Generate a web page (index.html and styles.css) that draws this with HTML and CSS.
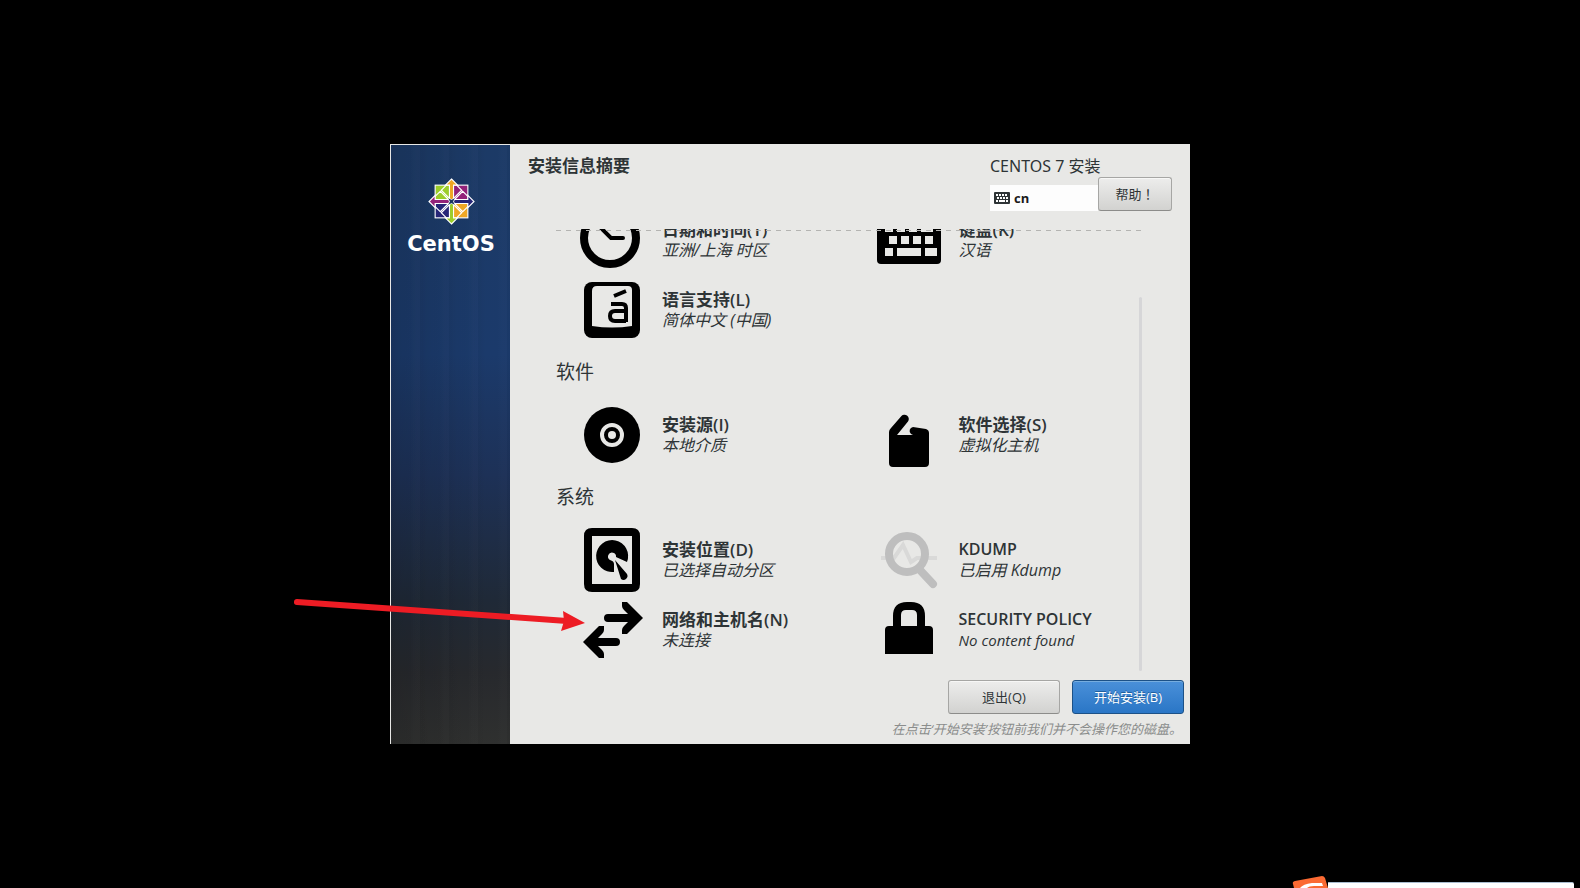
FILE: index.html
```html
<!DOCTYPE html>
<html lang="zh-CN">
<head>
<meta charset="utf-8">
<title>CentOS 7 安装</title>
<link rel="stylesheet" href="styles.css">
</head>
<body>
<main class="installer">
  <aside class="sidebar">
    <svg class="logo" viewBox="-23 -23 46 46" aria-hidden="true">
      <g stroke="#fff" stroke-width="1.1">
        <rect x="-16" y="-16" width="15" height="15" fill="#9ccd2a"/>
        <rect x="1" y="-16" width="15" height="15" fill="#932279"/>
        <rect x="1" y="1" width="15" height="15" fill="#efa724"/>
        <rect x="-16" y="1" width="15" height="15" fill="#262577"/>
        <path d="M0-22 6-16H2V-2H-2V-16H-6Z" fill="#efa724"/>
        <path d="M22 0 16 6V2H2V-2H16V-6Z" fill="#262577"/>
        <path d="M0 22 6 16H2V2H-2V16H-6Z" fill="#9ccd2a"/>
        <path d="M-22 0-16 6V2H-2V-2H-16V-6Z" fill="#932279"/>
        <path d="M-1-2-10-11-5-16M1-2 10-11 5-16M-1 2-10 11-5 16M1 2 10 11 5 16M-2-1-11-10-16-5M2-1 11-10 16-5M-2 1-11 10-16 5M2 1 11 10 16 5" fill="none"/>
      </g>
      <path d="M-2-2 0-1 2-2 1 0 2 2 0 1-2 2-1 0Z" fill="#1a3560" stroke="#1a3560"/>
    </svg>
    <div class="wordmark">CentOS</div>
  </aside>
  <section class="content">
    <header class="header">
      <h1 class="title">安装信息摘要</h1>
      <div class="session">
        <div class="product">CENTOS 7 安装</div>
        <div class="session-row">
          <div class="layout">
            <svg class="layout-icon" viewBox="0 0 16 12" aria-hidden="true"><rect width="16" height="12" rx="1" fill="#2e3436"/><path d="M2 3h12M3 6h11" stroke="#fff" stroke-width="2" stroke-dasharray="2 1"/><path d="M2 9h2M5 9h6M12 9h2" stroke="#fff" stroke-width="2"/></svg>
            <span>cn</span>
          </div>
          <button class="button help" type="button">帮助<span lang="zh-TW">！</span></button>
        </div>
      </div>
    </header>
    <div class="hub">
      <div class="hub-list">
        <div class="group">
          <a class="spoke" href="#datetime">
            <svg class="icon" viewBox="0 0 64 64" aria-hidden="true"><g fill="none" stroke="#000"><circle cx="30" cy="30" r="26" stroke-width="8"/><path d="M20 19 31 30H43" stroke-width="4" stroke-linecap="round"/></g></svg>
            <span class="label"><b>日期和时间(T)</b><i>亚洲/上海 时区</i></span>
          </a>
          <a class="spoke" href="#keyboard">
            <svg class="icon" viewBox="0 0 64 64" aria-hidden="true"><rect y="8" width="64" height="48" rx="4"/><path fill="#e8e8e6" d="M8 16h8v8H8zM20 16h8v8h-8zM32 16h8v8h-8zM44 16h12v8H44zM12 28h8v8h-8zM24 28h8v8h-8zM36 28h8v8h-8zM48 28h8v8h-8zM8 40h8v8H8zM20 40h24v8H20zM48 40h12v8H48z"/></svg>
            <span class="label"><b>键盘(K)</b><i>汉语</i></span>
          </a>
          <a class="spoke" href="#language">
            <svg class="icon" viewBox="0 0 64 64" aria-hidden="true"><rect x="4" y="4" width="56" height="56" rx="8"/><path fill="#e8e8e6" d="M17 8H48Q52 8 52 12V48Q32 51 12 48V13Q12 8 17 8Z"/><path d="M31 26H42Q46 26 46 30V44M46 33H35Q30 33 30 38T35 43H46M34 18 46 13" fill="none" stroke="#000" stroke-width="4"/></svg>
            <span class="label"><b>语言支持(L)</b><i>简体中文 (中国)</i></span>
          </a>
        </div>
        <h2 class="section">软件</h2>
        <div class="group">
          <a class="spoke" href="#source">
            <svg class="icon" viewBox="0 0 64 64" aria-hidden="true"><circle cx="32" cy="32" r="28"/><circle cx="32" cy="32" r="10" fill="none" stroke="#e8e8e6" stroke-width="4"/><circle cx="32" cy="32" r="4" fill="#e8e8e6"/></svg>
            <span class="label"><b>安装源(I)</b><i>本地介质</i></span>
          </a>
          <a class="spoke" href="#software">
            <svg class="icon" viewBox="0 0 64 64" aria-hidden="true"><path d="M12 29Q12 27 14 25L24 13.500A4 4 0 0 1 31 18.500L20 32H36L34 31A4 4 0 0 1 36 24L49 26Q52 27 52 30V60Q52 64 48 64H16Q12 64 12 60Z"/></svg>
            <span class="label"><b>软件选择(S)</b><i>虚拟化主机</i></span>
          </a>
        </div>
        <h2 class="section">系统</h2>
        <div class="group">
          <a class="spoke" href="#destination">
            <svg class="icon" viewBox="0 0 64 64" aria-hidden="true"><path fill-rule="evenodd" d="M12 0H52Q60 0 60 8V56Q60 64 52 64H12Q4 64 4 56V8Q4 0 12 0ZM12 8V56H52V8Z"/><path d="M34 44A16 16 0 1 1 47 34L36 29A4 4 0 1 0 30 32Q34 33 34 36Z"/><path d="M35 32 47 46A4 4 0 0 1 41 51Z"/></svg>
            <span class="label"><b>安装位置(D)</b><i>已选择自动分区</i></span>
          </a>
          <a class="spoke" href="#kdump">
            <svg class="icon" viewBox="0 0 64 64" aria-hidden="true"><path d="M4 30H17L26 17 34 34 40 30H60" fill="none" stroke="#d9d9d8" stroke-width="4"/><g fill="none" stroke="#bebebe"><circle cx="30" cy="26" r="18" stroke-width="8"/><path d="M42 41 56 56" stroke-width="8" stroke-linecap="round"/></g></svg>
            <span class="label"><b class="latin">KDUMP</b><i>已启用 Kdump</i></span>
          </a>
          <a class="spoke" href="#network">
            <svg class="icon" viewBox="0 0 64 64" aria-hidden="true"><path d="M28 20H56M12 44H36" fill="none" stroke="#000" stroke-width="8" stroke-linecap="round"/><path d="M42 4H47L63 20 47 36H42V32Q42 30 44 28L52 20 44 12Q42 10 42 8Z"/><path d="M24 28H19L3 44 19 60H24V56Q24 54 22 52L14 44 22 36Q24 34 24 32Z"/></svg>
            <span class="label"><b>网络和主机名(N)</b><i>未连接</i></span>
          </a>
          <a class="spoke" href="#security">
            <svg class="icon" viewBox="0 0 64 64" aria-hidden="true"><path fill-rule="evenodd" d="M8 32Q8 28 12 28H16V18Q16 4 30 4H34Q48 4 48 18V28H52Q56 28 56 32V56H8ZM24 28H40V17Q40 12 35 12H29Q24 12 24 17Z"/></svg>
            <span class="label"><b class="latin">SECURITY POLICY</b><i class="latin">No content found</i></span>
          </a>
        </div>
      </div>
      <div class="scrollbar"></div>
    </div>
    <footer class="footer">
      <div class="actions">
        <button class="button" type="button">退出(Q)</button>
        <button class="button primary" type="button">开始安装(B)</button>
      </div>
      <p class="note">在点击‘开始安装’按钮前我们并不会操作您的磁盘。</p>
    </footer>
  </section>
  <svg class="pointer" viewBox="0 0 294 32" aria-hidden="true"><path d="M5 6 275 25" stroke="#ed1c24" stroke-width="6" stroke-linecap="round"/><path d="M271 15 293 27 269 35 272 25Z" fill="#ed1c24"/></svg>
</main>
<div class="ime">
  <svg class="ime-logo" viewBox="0 0 36 12" aria-hidden="true"><path d="M1 8Q0 6 3 5L30 0Q32 0 33 2L36 12H2Z" fill="#fb6a33"/><path d="M8 12Q11 8 20 7H30L31 10H22Q17 10 15 12Z" fill="#fff"/></svg>
  <div class="ime-bar"></div>
</div>
</body>
</html>
```
FILE: styles.css
```css
* { box-sizing: border-box; }

body {
  margin: 0;
  min-height: 100vh;
  display: flex;
  align-items: center;
  justify-content: center;
  background: #000;
  color: #2e3436;
  font-family: "Open Sans", "Noto Sans CJK SC", sans-serif;
  font-size: 16px;
  overflow: hidden;
}

.installer {
  position: relative;
  display: flex;
  width: 100%;
  max-width: 800px;
  min-height: 600px;
  padding: 1px 0 0 1px;
  background: #e8e8e6;
}

.sidebar {
  flex: 0 0 119px;
  display: flex;
  flex-direction: column;
  align-items: center;
  padding: 33px 0 0 1px;
  background:
    repeating-linear-gradient(90deg, rgba(0, 0, 0, 0.02) 0 3px, transparent 8px 19px, rgba(255, 255, 255, 0.01) 24px 29px),
    linear-gradient(90deg, rgba(0, 0, 0, 0.12), transparent 80%),
    linear-gradient(#1c3a66 0%, #1b3a6b 35%, #1d3157 55%, #1f2937 76%, #27292d 88%, #2f302f 100%);
}

.logo { width: 47px; height: 47px; }

.wordmark {
  color: #fff;
  font: bold 21px/38px "DejaVu Sans", sans-serif;
}

.content {
  flex: 1;
  min-width: 0;
  display: flex;
  flex-direction: column;
}

.header {
  display: flex;
  justify-content: space-between;
  height: 84px;
  padding: 9px 18px 0;
}

.title {
  margin: 0;
  font-size: 17px;
  font-weight: 700;
  line-height: 24px;
}

.product { font-family: "Noto Sans", "Noto Sans CJK SC", sans-serif; line-height: 24px; }
.session-row { display: flex; align-items: flex-end; margin-top: -1px; }

.layout {
  display: flex;
  align-items: center;
  gap: 4px;
  width: 108px;
  height: 26px;
  padding: 0 0 1px 4px;
  background: #fdfdfd;
  color: #1a1a1a;
  font-size: 13px;
  font-weight: 700;
}

.layout-icon { width: 16px; height: 12px; }

.button {
  width: 112px;
  height: 34px;
  padding: 0 0 2px;
  border: 1px solid #a6a6a4;
  border-bottom-color: #8c8c8a;
  border-radius: 3px;
  background: linear-gradient(#ededec, #d2d2d0);
  box-shadow: inset 0 1px #f7f7f6;
  color: #2e3436;
  font: inherit;
  font-size: 13px;
}

.button.help { width: 74px; }
.button.help span { font-family: "Noto Sans CJK TC", sans-serif; }

.button.primary {
  border-color: #1c5187;
  background: linear-gradient(#4a90d9, #2a76c6);
  box-shadow: inset 0 1px #76addf;
  color: #fff;
  text-shadow: 0 -1px #1f5f9f;
}

.hub {
  position: relative;
  display: flex;
  justify-content: space-between;
  height: 442px;
  margin: 0 48px 0 46px;
}

.hub::before {
  content: "";
  position: absolute;
  top: 1px;
  left: 0;
  right: 0;
  height: 1px;
  background: repeating-linear-gradient(90deg, #b4b4b2 0 5px, transparent 5px 10px);
}

.hub-list {
  flex: 1;
  display: flex;
  flex-direction: column;
  justify-content: flex-end;
  padding-bottom: 9px;
  overflow: hidden;
}

.scrollbar {
  width: 3px;
  margin-top: 68px;
  border-radius: 2px;
  background: #d6d6d8;
}

.group {
  display: grid;
  grid-template-columns: 1fr 1fr;
  gap: 6px 34px;
  padding-left: 24px;
}

.section {
  margin: 0;
  font-size: 19px;
  font-weight: 400;
  line-height: 61px;
}

.spoke {
  display: flex;
  align-items: center;
  gap: 18px;
  color: inherit;
  text-decoration: none;
}

.icon { flex: none; width: 64px; height: 64px; }
.label { white-space: nowrap; }
.label b, .label i { display: block; line-height: 21px; }
.label b { font-size: 17px; font-weight: 600; }
.label b.latin { font-size: 16px; }
.label i.latin { font-size: 15px; }

.footer { padding: 9px 6px 0; }
.actions { display: flex; justify-content: flex-end; gap: 12px; }

.note {
  margin: 5px 2px 0;
  color: #8b8d8c;
  font-size: 13px;
  font-style: italic;
  line-height: 20px;
  text-align: right;
}

.pointer {
  position: absolute;
  top: 452px;
  left: -98px;
  width: 294px;
  height: 32px;
  overflow: visible;
}

.ime {
  position: absolute;
  right: 6px;
  bottom: 0;
  display: flex;
  align-items: flex-end;
}

.ime-logo { width: 36px; height: 12px; }
.ime-bar {
  width: 246px;
  height: 6px;
  border-top: 1px solid #a9bccf;
  border-radius: 0 2px 0 0;
  background: #fff;
}
```
